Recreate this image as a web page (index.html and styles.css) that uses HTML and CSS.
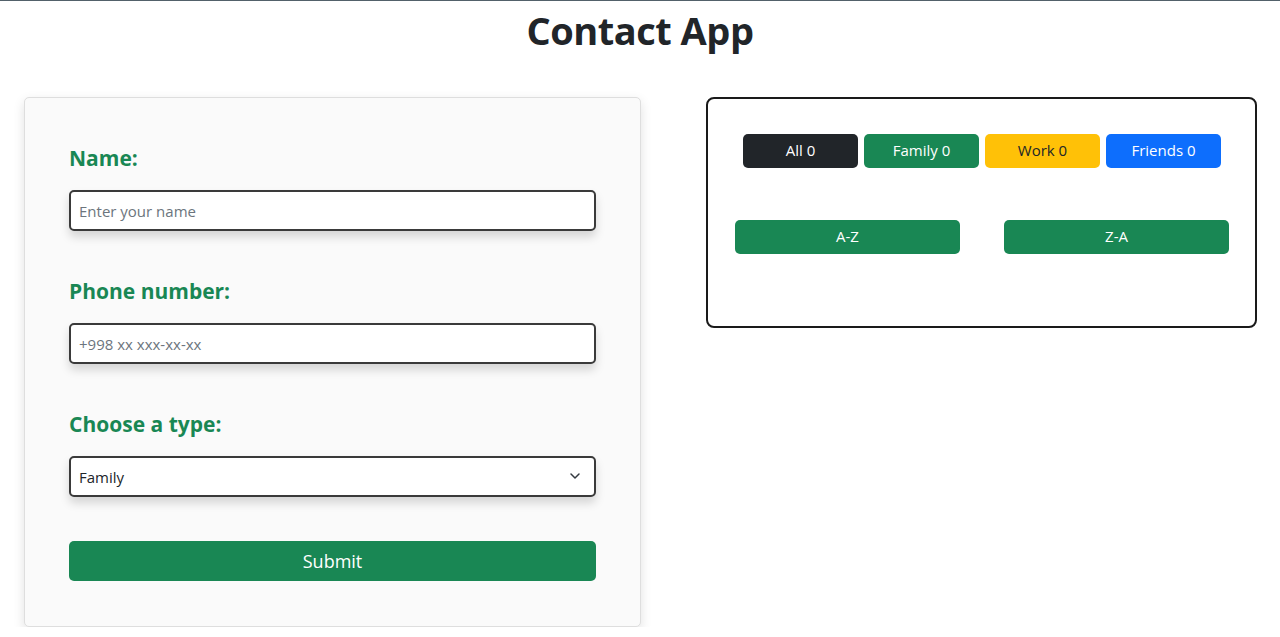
FILE: index.html
```html
<!DOCTYPE html>
<html lang="en">
<head>
<meta charset="utf-8">
<title>Contact App</title>
<link rel="stylesheet" href="styles.css">
</head>
<body>
<div class="topline"></div>
<h1 class="title">Contact App</h1>
<main class="layout">
  <form class="form-card">
    <label class="field-label" for="name">Name:</label>
    <input class="field" id="name" type="text" placeholder="Enter your name">
    <label class="field-label" for="phone">Phone number:</label>
    <input class="field" id="phone" type="text" placeholder="+998 xx xxx-xx-xx">
    <label class="field-label" for="type">Choose a type:</label>
    <div class="select-wrap">
      <select class="field select" id="type">
        <option>Family</option>
        <option>Work</option>
        <option>Friends</option>
      </select>
      <svg class="chevron" width="12" height="8" viewBox="0 0 12 8"><path d="M2 2 L6 6 L10 2" fill="none" stroke="#343a40" stroke-width="1.5" stroke-linecap="round" stroke-linejoin="round"/></svg>
    </div>
    <button class="submit" type="button">Submit</button>
  </form>
  <section class="filter-card">
    <div class="filters">
      <button class="chip chip-dark" type="button">All 0</button>
      <button class="chip chip-green" type="button">Family 0</button>
      <button class="chip chip-yellow" type="button">Work 0</button>
      <button class="chip chip-blue" type="button">Friends 0</button>
    </div>
    <div class="sorts">
      <button class="sort" type="button">A-Z</button>
      <button class="sort" type="button">Z-A</button>
    </div>
  </section>
</main>
</body>
</html>
```
FILE: styles.css
```css
* { box-sizing: border-box; }
html, body { margin: 0; padding: 0; }
body {
  font-family: "Open Sans", "Noto Sans", sans-serif;
  color: #212529;
  background: #fff;
}
.topline { height: 1px; background: #52616a; }
.title {
  margin: 5px 0 0;
  text-align: center;
  font-size: 38px;
  line-height: 48px;
  font-weight: 700;
  color: #212529;
  letter-spacing: -0.5px;
}
.layout {
  display: grid;
  grid-template-columns: 617px 551px;
  column-gap: 65px;
  padding: 43px 23px 0 24px;
  align-items: start;
}
.form-card {
  display: flex;
  flex-direction: column;
  background: #fafafa;
  border: 1px solid #dedede;
  border-radius: 5px;
  box-shadow: 0 4px 12px rgba(0,0,0,0.12);
  padding: 45px 44px 45px;
}
.field-label {
  font-size: 21px;
  font-weight: 700;
  color: #198754;
  line-height: 30px;
  margin-bottom: 17px;
}
.field {
  height: 41px;
  border: 2px solid #3a3a3a;
  border-radius: 5px;
  background: #fff;
  box-shadow: 0 6px 10px rgba(0,0,0,0.15);
  padding: 0 8px;
  font-family: inherit;
  font-size: 15px;
  color: #212529;
  margin-bottom: 45px;
  width: 100%;
  outline: none;
}
.field::placeholder { color: #6c757d; }
.select-wrap { position: relative; }
.select {
  appearance: none;
  -webkit-appearance: none;
  margin-bottom: 44px;
}
.chevron { position: absolute; right: 15px; top: 16px; pointer-events: none; }
.submit {
  height: 40px;
  border: 0;
  border-radius: 5px;
  background: #198754;
  color: #fff;
  font-family: inherit;
  font-size: 18px;
}
.filter-card {
  border: 2px solid #1a1a1a;
  border-radius: 8px;
  height: 231px;
  padding: 35px 26px 0 27px;
}
.filters {
  display: flex;
  justify-content: center;
  gap: 6px;
}
.chip {
  width: 115px;
  height: 34px;
  border: 0;
  border-radius: 5px;
  font-family: inherit;
  font-size: 15px;
  line-height: 32px;
  padding: 0 0 2px;
  color: #fff;
}
.chip-dark { background: #212529; }
.chip-green { background: #198754; }
.chip-yellow { background: #ffc107; color: #212529; }
.chip-blue { background: #0d6efd; }
.sorts {
  display: flex;
  justify-content: space-between;
  margin-top: 52px;
}
.sort {
  width: 225px;
  height: 34px;
  border: 0;
  border-radius: 5px;
  background: #198754;
  color: #fff;
  font-family: inherit;
  font-size: 15px;
  line-height: 32px;
  padding: 0 0 2px;
}
```
